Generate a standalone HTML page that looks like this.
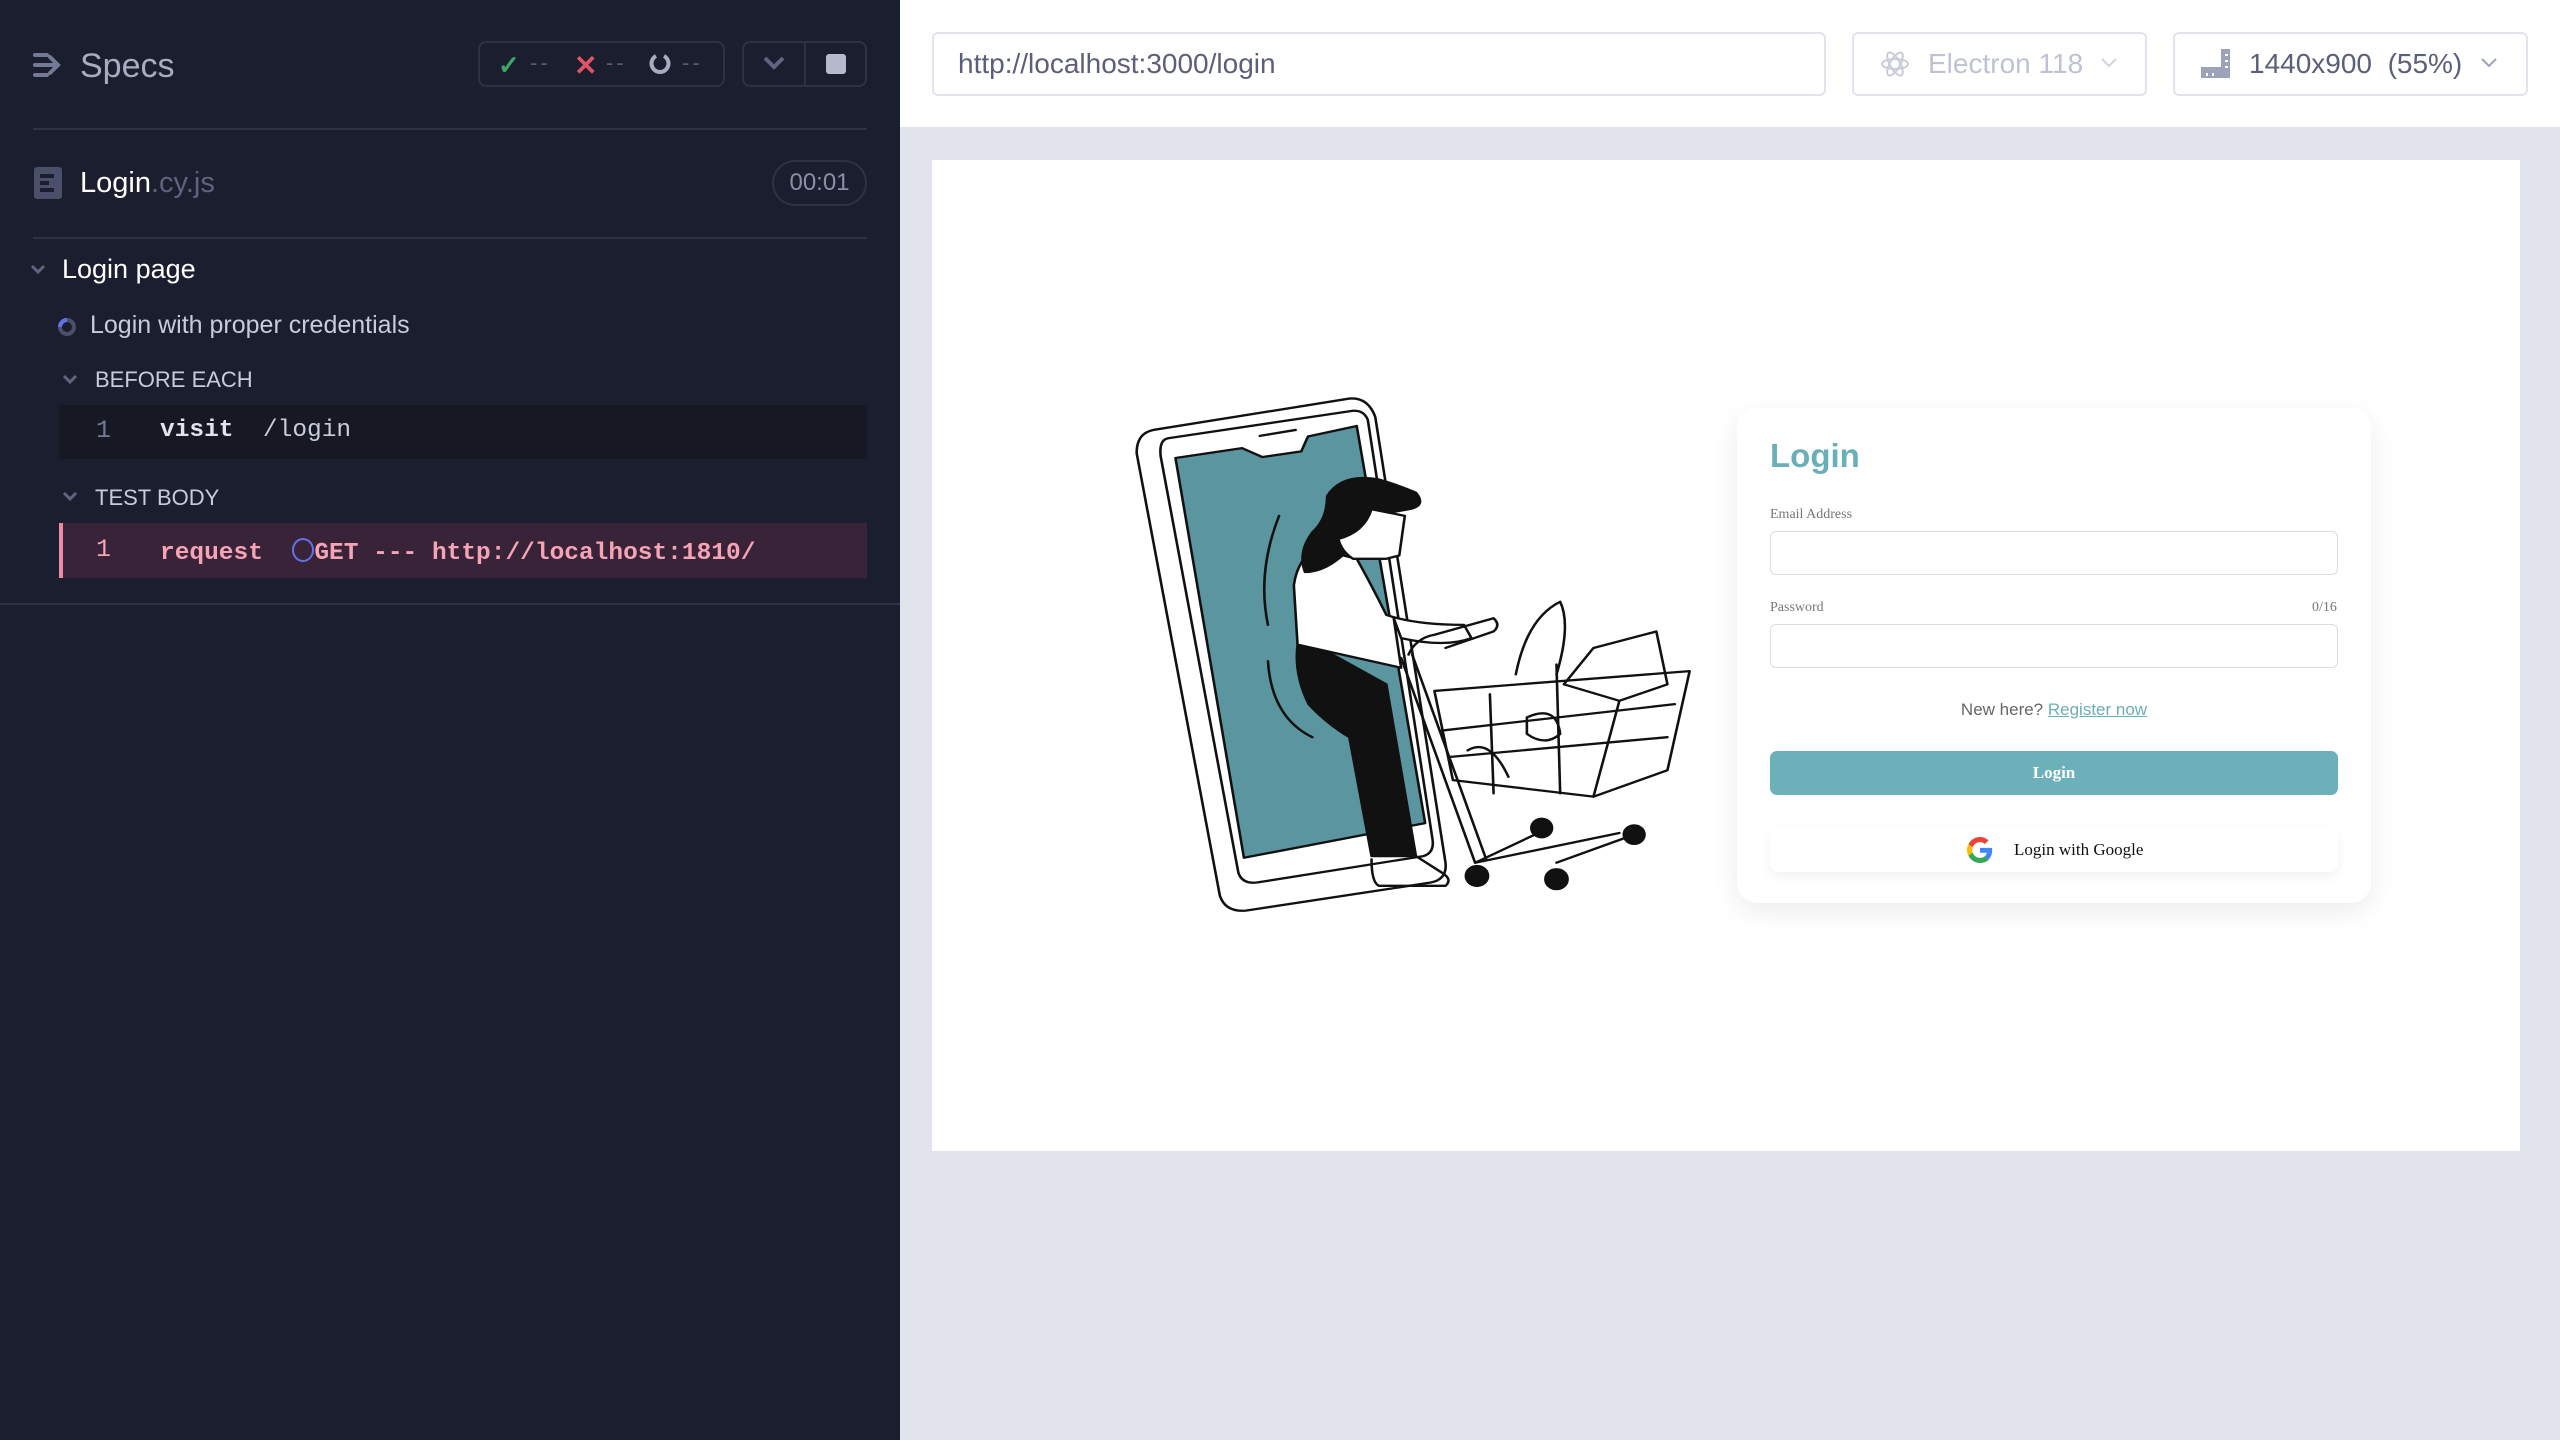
<!DOCTYPE html>
<html><head><meta charset="utf-8">
<style>
*{margin:0;padding:0;box-sizing:border-box}
body{width:2560px;height:1440px;overflow:hidden;background:#e1e3ed;font-family:"Liberation Sans",sans-serif;position:relative}
.abs{position:absolute}
#side{left:0;top:0;width:900px;height:1440px;background:#1b1e2e}
.mono{font-family:"Liberation Mono","DejaVu Sans Mono",monospace}
</style></head><body>
<div id="side" class="abs">
  <svg class="abs" style="left:33px;top:52px" width="30" height="26" viewBox="0 0 30 26"><g stroke="#747994" stroke-width="4" stroke-linecap="round" fill="none"><path d="M2 3h12M2 13h20M2 23h12M17 5l8 8-8 8"/></g></svg>
  <div class="abs" style="left:80px;top:47px;font-size:34px;color:#a8acc0">Specs</div>
  <div class="abs" style="left:478px;top:41px;width:247px;height:46px;border:2px solid #2e3247;border-radius:8px"></div>
  <div class="abs" style="left:498px;top:50px;font-size:26px;color:#3fa66a;font-weight:bold">✓</div>
  <div class="abs" style="left:530px;top:50px;font-size:22px;color:#565b75;letter-spacing:3px">--</div>
  <div class="abs" style="left:574px;top:49px;font-size:28px;color:#e05566;font-weight:bold">✕</div>
  <div class="abs" style="left:606px;top:50px;font-size:22px;color:#565b75;letter-spacing:3px">--</div>
  <svg class="abs" style="left:649px;top:53px" width="22" height="22" viewBox="0 0 22 22"><path d="M7 3A8.5 8.5 0 1 0 15 3" stroke="#a8acc0" stroke-width="4" fill="none"/></svg>
  <div class="abs" style="left:682px;top:50px;font-size:22px;color:#565b75;letter-spacing:3px">--</div>
  <div class="abs" style="left:742px;top:41px;width:125px;height:46px;border:2px solid #2e3247;border-radius:8px"></div>
  <div class="abs" style="left:804px;top:42px;width:2px;height:44px;background:#2e3247"></div>
  <svg class="abs" style="left:763px;top:56px" width="22" height="14" viewBox="0 0 22 14"><path d="M2 2l9 9 9-9" stroke="#5f6480" stroke-width="4" fill="none"/></svg>
  <div class="abs" style="left:826px;top:54px;width:20px;height:20px;background:#b6b9cc;border-radius:3px"></div>
  <div class="abs" style="left:33px;top:128px;width:834px;height:2px;background:#2e3247"></div>
  <svg class="abs" style="left:33px;top:166px" width="30" height="34" viewBox="0 0 30 34"><rect x="1" y="1" width="28" height="32" rx="3" fill="#4b4f69"/><g fill="#1b1e2e"><rect x="7" y="8" width="14" height="4"/><rect x="7" y="15" width="9" height="4"/><rect x="7" y="22" width="14" height="4"/></g></svg>
  <div class="abs" style="left:80px;top:167px;font-size:29px;color:#fff">Login<span style="color:#5e6380">.cy.js</span></div>
  <div class="abs" style="left:772px;top:160px;width:95px;height:46px;border:2px solid #2e3247;border-radius:23px;color:#8a8fa8;font-size:24px;text-align:center;line-height:42px">00:01</div>
  <div class="abs" style="left:33px;top:237px;width:834px;height:2px;background:#2e3247"></div>
  <svg class="abs" style="left:30px;top:264px" width="16" height="12" viewBox="0 0 16 12"><path d="M2 2l6 6 6-6" stroke="#5f6480" stroke-width="3" fill="none"/></svg>
  <div class="abs" style="left:62px;top:254px;font-size:27px;color:#fff">Login page</div>
  <svg class="abs" style="left:57px;top:317px" width="20" height="20" viewBox="0 0 20 20"><circle cx="10" cy="10" r="7" stroke="#4b4f69" stroke-width="4" fill="none"/><path d="M10 3A7 7 0 0 0 3 10" stroke="#6173e8" stroke-width="4" fill="none"/></svg>
  <div class="abs" style="left:90px;top:311px;font-size:25px;color:#c8cbda">Login with proper credentials</div>
  <svg class="abs" style="left:62px;top:374px" width="16" height="12" viewBox="0 0 16 12"><path d="M2 2l6 6 6-6" stroke="#5f6480" stroke-width="3" fill="none"/></svg>
  <div class="abs" style="left:95px;top:367px;font-size:22px;color:#c8cbda">BEFORE EACH</div>
  <div class="abs" style="left:59px;top:405px;width:808px;height:54px;background:#161823"></div>
  <div class="abs mono" style="left:96px;top:416px;font-size:25px;color:#747994">1</div>
  <div class="abs mono" style="left:160px;top:417px;font-size:24.5px;color:#e1e3ed;font-weight:bold;white-space:pre">visit  <span style="color:#c8cbda;font-weight:normal">/login</span></div>
  <svg class="abs" style="left:62px;top:491px" width="16" height="12" viewBox="0 0 16 12"><path d="M2 2l6 6 6-6" stroke="#5f6480" stroke-width="3" fill="none"/></svg>
  <div class="abs" style="left:95px;top:485px;font-size:22px;color:#c8cbda">TEST BODY</div>
  <div class="abs" style="left:59px;top:523px;width:808px;height:55px;background:#392338;border-left:4px solid #f18aa0"></div>
  <div class="abs mono" style="left:96px;top:535px;font-size:25px;color:#f5a3b5">1</div>
  <div class="abs mono" style="left:160px;top:538px;font-size:24.5px;color:#f5a3b5;font-weight:bold;white-space:pre">request  <span style="display:inline-block;width:22px;height:24px;border:2px solid #6173e8;border-radius:50%;vertical-align:-3px"></span>GET --- http://localhost:1810/</div>
  <div class="abs" style="left:0;top:603px;width:900px;height:2px;background:#2e3247"></div>
</div>
<div class="abs" style="left:900px;top:0;width:1660px;height:127px;background:#fff"></div>
<div class="abs" style="left:932px;top:32px;width:894px;height:64px;border:2px solid #e1e3ed;border-radius:6px;font-size:28px;color:#5a5f7a;padding-left:24px;line-height:60px">http://localhost:3000/login</div>
<div class="abs" style="left:1852px;top:32px;width:295px;height:64px;border:2px solid #e1e3ed;border-radius:6px;font-size:28px;color:#bfc2d4;line-height:60px;padding-left:74px">Electron 118</div>
<svg class="abs" style="left:1880px;top:49px" width="30" height="30" viewBox="0 0 30 30"><g stroke="#c9ccd8" stroke-width="2" fill="none"><ellipse cx="15" cy="15" rx="13" ry="5"/><ellipse cx="15" cy="15" rx="13" ry="5" transform="rotate(60 15 15)"/><ellipse cx="15" cy="15" rx="13" ry="5" transform="rotate(120 15 15)"/></g></svg>
<svg class="abs" style="left:2100px;top:57px" width="18" height="12" viewBox="0 0 18 12"><path d="M2 2l7 7 7-7" stroke="#d0d3de" stroke-width="2" fill="none"/></svg>
<div class="abs" style="left:2173px;top:32px;width:355px;height:64px;border:2px solid #e1e3ed;border-radius:6px;font-size:28px;color:#5a5f7a;line-height:60px;padding-left:74px;white-space:pre">1440x900  (55%)</div>
<svg class="abs" style="left:2199px;top:47px" width="32" height="32" viewBox="0 0 32 32"><path d="M2 20h20V2h9v29H2z" fill="#9ea2b8"/><g stroke="#fff" stroke-width="2"><path d="M26 8h3M26 14h3M26 20h3M8 26v3M14 26v3"/></g></svg>
<svg class="abs" style="left:2480px;top:57px" width="18" height="12" viewBox="0 0 18 12"><path d="M2 2l7 7 7-7" stroke="#9ea2b8" stroke-width="2" fill="none"/></svg>
<div class="abs" style="left:932px;top:160px;width:1588px;height:991px;background:#fff"></div>
<svg class="abs" style="left:1120px;top:387px;overflow:visible" width="580" height="518" viewBox="0 0 1568 1568" preserveAspectRatio="none">
<g stroke="#111" stroke-width="7" fill="none" stroke-linejoin="round" stroke-linecap="round">
<path d="M90 130 Q45 140 45 200 L270 1540 Q285 1590 340 1585 L840 1500 Q885 1490 880 1440 L690 90 Q670 30 620 35 Z" fill="#fff"/>
<path d="M130 155 Q105 160 110 210 L320 1470 Q330 1505 370 1500 L820 1420 Q850 1410 845 1370 L670 100 Q660 70 630 72 Z"/>
<path d="M150 215 L330 185 L385 212 L490 195 L508 150 L640 118 L825 1320 L335 1425 Z" fill="#5b95a0"/>
<path d="M378 148 L475 130"/>
<path d="M430 390 Q370 560 400 720 M400 830 Q410 1000 520 1060"/>
<path d="M480 780 L510 770 Q640 850 720 900 L800 1420 L680 1420 L620 1060 Q560 1020 510 960 Q470 870 480 780 Z" fill="#111"/>
<path d="M480 780 L470 600 Q480 520 530 490 L640 520 Q680 600 720 690 Q800 720 930 720 L950 760 Q880 790 760 760 L740 700 L760 850 L640 820 Z" fill="#fff"/>
<path d="M560 330 Q600 260 700 280 Q760 300 800 320 Q830 360 780 370 L730 380 L680 370 Q670 460 620 490 Q560 560 500 560 Q480 500 520 440 Q560 400 560 330 Z" fill="#111"/>
<path d="M680 370 L770 390 L755 510 L720 520 L630 520 Q600 500 590 460 Q660 440 680 370 Z" fill="#fff"/>
<path d="M680 1430 Q680 1500 700 1510 L880 1510 Q900 1490 870 1470 L800 1420"/>
<path d="M760 820 L960 1440 L1350 1350 M790 810 L990 1430"/>
<path d="M780 810 Q800 760 850 750 L1010 700 Q1030 720 1010 740 L880 790"/>
<path d="M850 920 L1540 860 L1480 1160 L1280 1240 L900 1190 Z"/>
<path d="M870 1040 L1500 960 M890 1120 L1480 1060 M1180 840 L1190 1230 M1000 930 L1010 1230 M1350 950 L1280 1240"/>
<path d="M1070 870 Q1100 700 1190 650 Q1220 720 1180 870 M1280 790 L1450 740 L1480 900 L1350 950 L1200 900 Z M1100 1000 Q1180 960 1190 1050 Q1150 1090 1100 1050 Z M940 1100 Q1000 1060 1050 1180"/>
<circle cx="965" cy="1480" r="30" fill="#111"/><circle cx="1180" cy="1490" r="30" fill="#111"/><circle cx="1140" cy="1335" r="28" fill="#111"/><circle cx="1390" cy="1355" r="28" fill="#111"/>
<path d="M960 1440 L1150 1340 M1180 1440 L1390 1355"/>
</g>
</svg>
<div class="abs" style="left:1737px;top:408px;width:634px;height:495px;background:#fff;border-radius:20px;box-shadow:0 8px 26px rgba(0,0,0,.08)"></div>
<div class="abs" style="left:1770px;top:437px;font-size:33px;color:#6aafb8;font-weight:bold">Login</div>
<div class="abs" style="left:1770px;top:507px;font-size:14px;color:#777;font-family:'Liberation Serif',serif">Email Address</div>
<div class="abs" style="left:1770px;top:531px;width:568px;height:44px;border:1px solid #ddd;border-radius:6px"></div>
<div class="abs" style="left:1770px;top:600px;font-size:14px;color:#777;font-family:'Liberation Serif',serif">Password</div>
<div class="abs" style="left:2312px;top:600px;font-size:14px;color:#777;font-family:'Liberation Serif',serif">0/16</div>
<div class="abs" style="left:1770px;top:624px;width:568px;height:44px;border:1px solid #ddd;border-radius:6px"></div>
<div class="abs" style="left:1770px;top:700px;width:568px;text-align:center;font-size:17px;color:#666">New here? <span style="color:#6aafb8;text-decoration:underline">Register now</span></div>
<div class="abs" style="left:1770px;top:751px;width:568px;height:44px;background:#6cb0b9;border-radius:7px;color:#fff;font-family:'Liberation Serif',serif;font-weight:bold;font-size:17px;text-align:center;line-height:44px">Login</div>
<div class="abs" style="left:1770px;top:828px;width:568px;height:44px;background:#fff;border-radius:8px;box-shadow:0 4px 12px rgba(0,0,0,.06);font-family:'Liberation Serif',serif;font-size:17px;color:#111;line-height:44px;padding-left:244px">Login with Google</div>
<svg class="abs" style="left:1967px;top:837px" width="26" height="26" viewBox="0 0 48 48"><path fill="#EA4335" d="M24 9.5c3.5 0 6.6 1.2 9 3.5l6.7-6.7C35.6 2.4 30.2 0 24 0 14.6 0 6.6 5.4 2.7 13.2l7.8 6C12.4 13.7 17.7 9.5 24 9.5z"/><path fill="#4285F4" d="M46.5 24.5c0-1.6-.1-3.1-.4-4.5H24v9h12.7c-.6 2.9-2.2 5.4-4.7 7.1l7.6 5.9c4.4-4.1 6.9-10.1 6.9-17.5z"/><path fill="#FBBC05" d="M10.5 28.8c-.5-1.5-.8-3.1-.8-4.8s.3-3.3.8-4.8l-7.8-6C1 16.5 0 20.1 0 24s1 7.5 2.7 10.8l7.8-6z"/><path fill="#34A853" d="M24 48c6.5 0 11.9-2.1 15.9-5.8l-7.6-5.9c-2.1 1.4-4.9 2.3-8.3 2.3-6.3 0-11.6-4.2-13.5-9.9l-7.8 6C6.6 42.6 14.6 48 24 48z"/></svg>
</body></html>
